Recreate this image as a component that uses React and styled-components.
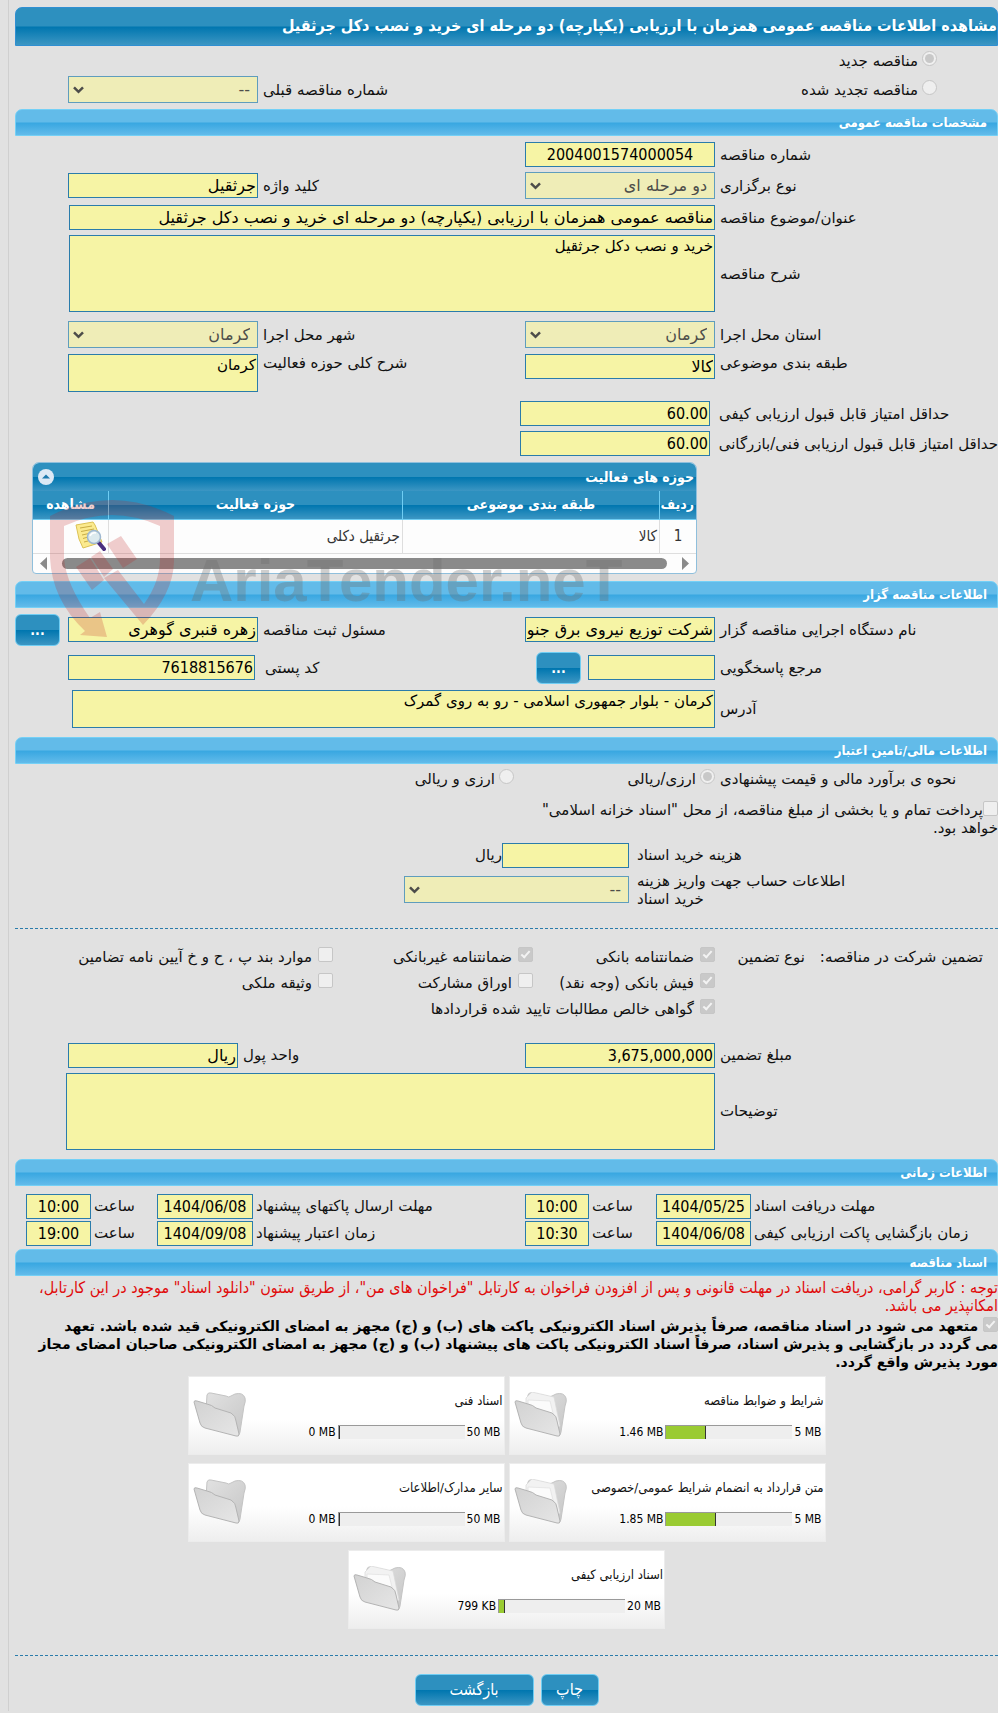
import React from "react";
import styled, { createGlobalStyle, css } from "styled-components";

const condensed = '"DejaVu Sans Condensed", "DejaVu Sans", sans-serif';

const GlobalStyle = createGlobalStyle`
  *, *::before, *::after { box-sizing: border-box; }
  body {
    margin: 0;
    background: #e1e1e1;
    overflow-x: hidden;
  }
  body, input, select, textarea, button {
    font-family: "DejaVu Sans", sans-serif;
  }
`;

const deepBlue = "linear-gradient(#2d90bf 0 49%, #0076af 51%, #3c96c3)";
const skyBlue = "linear-gradient(#62bbe9 0 48%, #38a7e1 52%, #62bbea)";

const Page = styled.main`
  margin-left: 8px;
  padding: 7px 0 5px 6px;
  border-left: 1px solid #cfcfcf;
  font-size: 15px;
  line-height: 18px;
  color: #111;
`;

const TitleBar = styled.h1`
  margin: 0;
  height: 39px;
  line-height: 36px;
  border: 1px solid #2f8fd2;
  border-radius: 7px 7px 0 0;
  background: ${deepBlue};
  color: #fff;
  font-family: ${condensed};
  font-size: 16px;
  font-weight: bold;
  white-space: nowrap;
  overflow: hidden;
`;

const SectionBar = styled.h2`
  margin: ${(p) => p.$top || 6}px 0 0;
  padding-right: 10px;
  height: 27px;
  line-height: 25px;
  border: 1px solid #74d0f6;
  border-radius: 7px 7px 0 0;
  background: ${skyBlue};
  color: #fff;
  font-family: ${condensed};
  font-size: 13px;
  font-weight: bold;
`;

const Row = styled.div`
  display: grid;
  grid-template-columns: ${(p) => p.$cols || "283fr 190fr 267fr 190fr 53fr"};
  align-items: ${(p) => p.$align || "center"};
  margin-top: ${(p) => (p.$top === undefined ? 6 : p.$top)}px;
  min-height: ${(p) => p.$h || 24}px;
  > * { min-width: 0; }
`;

const Label = styled.label`
  text-align: left;
  white-space: nowrap;
  padding-left: ${(p) => p.$pad || 5}px;
`;

const fieldBox = css`
  display: block;
  width: 100%;
  margin: 0;
  border: 1px solid #2a7cab;
  border-radius: 0;
  background: #f6f4a5;
  color: #000;
  outline: 0;
`;

const Field = styled.input`
  ${fieldBox}
  height: 25px;
  padding: 0 1px;
  font-size: 16px;
  text-align: ${(p) => (p.$center ? "center" : "right")};
  ${(p) => p.$numeric && css`font-family: ${condensed};`}
`;

const Area = styled.textarea`
  ${fieldBox}
  height: ${(p) => p.$h}px;
  padding: 1px 1px;
  font-size: 15px;
  line-height: 18px;
  resize: none;
  overflow: hidden;
`;

const SelectWrap = styled.div`
  position: relative;
  svg {
    position: absolute;
    left: 5px;
    top: 10px;
  }
`;

const SelectBox = styled.select`
  ${fieldBox}
  appearance: none;
  height: 27px;
  padding: 0 7px;
  border-color: #5f9dbd;
  background: #efedb7;
  color: #4d4d4a;
  font-size: 16px;
  opacity: 1;
`;

const Tick = styled.input`
  appearance: none;
  flex: none;
  display: inline-block;
  position: relative;
  width: 15px;
  height: 15px;
  margin: 0;
  border: 1px solid #c6c6c6;
  border-radius: ${(p) => (p.type === "radio" ? "50%" : "2px")};
  background: #efefef;
  vertical-align: -1px;
  &[type="checkbox"]:checked { background: #c9c9c9; }
  &[type="radio"]:checked::after {
    content: "";
    position: absolute;
    inset: 2px;
    border-radius: 50%;
    background: #c8c8c8;
  }
  &[type="checkbox"]:checked::after {
    content: "";
    position: absolute;
    left: 4px;
    top: 1px;
    width: 5px;
    height: 9px;
    border: solid #f3f3f3;
    border-width: 0 2px 2px 0;
    transform: rotate(42deg);
  }
`;

const Option = styled.label`
  display: flex;
  gap: ${(p) => p.$gap || 4}px;
  padding-right: ${(p) => p.$start || 0}px;
  white-space: nowrap;
  line-height: 20px;
`;

const Button = styled.button`
  height: 32px;
  min-width: ${(p) => p.$w}px;
  padding: 0 8px;
  border: 1px solid #6fcdf3;
  border-radius: 6px;
  background: ${deepBlue};
  color: #fff;
  font-family: ${condensed};
  font-size: ${(p) => (p.$strong ? 14 : 16)}px;
  font-weight: ${(p) => (p.$strong ? "bold" : "normal")};
`;

const Beside = styled.div`
  display: flex;
  gap: 7px;
  align-items: center;
  ${Field} { width: 127px; flex: none; }
  ${Button} { flex: none; }
`;

const Leftmost = styled.div`
  text-align: left;
`;

const Panel = styled.section`
  position: relative;
  margin: 6px 301px 0 17px;
`;

const PanelFrame = styled.div`
  border: 1px solid #8fbfdc;
  border-radius: 7px 7px 4px 4px;
  background: #fdfdfd;
  overflow: hidden;
`;

const PanelTitle = styled.header`
  display: flex;
  align-items: center;
  justify-content: space-between;
  height: 28px;
  padding: 0 2px 0 5px;
  background: ${deepBlue};
  color: #fff;
  font-family: ${condensed};
  font-size: 14px;
  font-weight: bold;
`;

const Table = styled.table`
  width: 100%;
  table-layout: fixed;
  border-collapse: collapse;
  font-family: ${condensed};
  th, td { padding: 0 2px; }
  th {
    height: 28px;
    padding-bottom: 2px;
    border-bottom: 1px solid #6fcdf3;
    background: ${deepBlue};
    color: #fff;
    font-size: 14px;
    white-space: nowrap;
  }
  th + th { border-right: 1px solid #6fcdf3; }
  td {
    height: 34px;
    border-bottom: 1px solid #dedede;
    font-size: 15px;
    color: #333;
  }
  td + td { border-right: 1px solid #dedede; }
  td:first-child { text-align: center; }
  td svg { display: block; }
`;

const ScrollStrip = styled.div`
  display: flex;
  align-items: center;
  gap: 15px;
  height: 19px;
  padding: 0 7px;
  direction: ltr;
  svg { flex: none; }
`;

const Thumb = styled.div`
  flex: 1;
  height: 11px;
  border-radius: 6px;
  background: #8a8a8a;
`;

const Watermark = styled.div`
  position: absolute;
  left: 18px;
  top: 38px;
  display: flex;
  gap: 14px;
  direction: ltr;
  pointer-events: none;
  z-index: 1;
  svg { flex: none; }
`;

const WatermarkName = styled.span`
  margin-top: 41px;
  font: bold 60px/80px "Liberation Sans", sans-serif;
  color: rgba(110, 110, 110, 0.32);
`;

const Payment = styled.label`
  display: block;
  max-width: 474px;
  margin-top: 9px;
`;

const Divider = styled.hr`
  margin: ${(p) => p.$top}px 0 0;
  border: 0;
  border-top: 1px dashed #2a7cab;
`;

const GuaranteeGrid = styled.div`
  display: grid;
  grid-template-columns: 185fr 98fr 182fr 200fr 318fr;
  grid-auto-rows: 26px;
  align-items: center;
  margin-top: 15px;
  > * { min-width: 0; white-space: nowrap; }
`;

const Cell = styled.span`
  grid-column: ${(p) => p.$col || "auto"};
  padding-right: ${(p) => p.$start || 0}px;
`;

const Notice = styled.p`
  margin: 3px 0 0;
  color: #e00b0b;
  font-family: ${condensed};
  font-size: 16px;
`;

const Pledge = styled.label`
  display: block;
  margin-top: 2px;
  font-size: 14px;
  font-weight: bold;
  color: #000;
`;

const Line = styled.span`
  display: block;
  white-space: nowrap;
`;

const Cards = styled.div`
  display: flex;
  flex-wrap: wrap;
  justify-content: center;
  gap: 8px 4px;
  max-width: 640px;
  margin: 5px auto 0;
`;

const Card = styled.article`
  display: flex;
  flex: none;
  justify-content: space-between;
  width: 317px;
  height: 79px;
  padding: 15px 1px 0 4px;
  border: 1px solid #ececec;
  background: linear-gradient(#fff 55%, #eee);
  font-family: ${condensed};
  font-size: 12px;
`;

const CardBody = styled.div`
  flex: 1;
  h3 {
    margin: 0 0 13px;
    font-size: 13px;
    line-height: 18px;
    font-weight: normal;
  }
`;

const Usage = styled.div`
  display: flex;
  align-items: center;
  gap: 2px;
  padding-right: 2px;
  color: #000;
`;

const Bar = styled.div`
  width: 127px;
  height: 14px;
  border-top: 1px solid #999;
  border-left: 1px solid #999;
  background: #eee;
  direction: ltr;
`;

const BarFill = styled.div`
  height: 100%;
  border-right: 1px solid #333;
  background: #9acb32;
`;

const Actions = styled.footer`
  display: flex;
  justify-content: center;
  gap: 7px;
  margin-top: 18px;
`;

const Select = ({ id, value }) => (
  <SelectWrap>
    <SelectBox id={id} disabled defaultValue={value}>
      <option>{value}</option>
    </SelectBox>
    <svg width="11" height="8" viewBox="0 0 11 8" fill="none" stroke="#4d4d4a" strokeWidth="2.5">
      <path d="M1 1.3 5.5 5.8 10 1.3" />
    </svg>
  </SelectWrap>
);

const Input = ({ id, value = "", center, numeric }) => (
  <Field id={id} type="text" readOnly value={value} $center={center} $numeric={numeric || center} />
);

const Choice = ({ type = "checkbox", name, checked = false, gap, start, children }) => (
  <Option $gap={gap} $start={start}>
    <Tick type={type} name={name} defaultChecked={checked} disabled />
    <span>{children}</span>
  </Option>
);

const Folder = ({ full, id }) => (
  <svg width="54" height="46" viewBox="0 0 54 46">
    <defs>
      <linearGradient id={`${id}b`} x1="0" y1="0" x2="1" y2="1">
        <stop offset="0" stopColor="#e2e2e2" />
        <stop offset="1" stopColor="#c6c6c6" />
      </linearGradient>
      <linearGradient id={`${id}f`} x1="0" y1="0" x2="1" y2="1">
        <stop offset="0" stopColor="#d2d2d2" />
        <stop offset="1" stopColor="#e6e6e6" />
      </linearGradient>
    </defs>
    <path d="M14 3Q15 0 18 1L33 4Q36 6 38 4L42 2Q50 0 52 6Q53 9 51 14L47 40Q46 45 43 43L12 34Z" fill={`url(#${id}b)`} stroke="#c4c4c4" />
    {full && (
      <>
        <path d="M12 6 18 0 40 5 46 34 41 38 12 20Z" fill="#f2f2f2" stroke="#d8d8d8" strokeWidth=".7" />
        <path d="M14 8 36 9 43 37 14 22Z" fill="#fbfbfb" stroke="#e0e0e0" strokeWidth=".7" />
      </>
    )}
    <path d="M1 10Q1 8 4 9L14 12Q19 13 22 16L38 21Q43 24 43 29L46 42Q46 45 43 44L12 36Q8 35 7 31Z" fill={`url(#${id}f)`} stroke="#b4b4b4" />
  </svg>
);

const NoteIcon = () => (
  <svg width="31" height="30" viewBox="0 0 31 30" role="img" aria-label="مشاهده">
    <path d="M1 4 18 1 20 4 27 21 8 27 4 18Z" fill="#fbea8e" stroke="#dcc254" />
    <path d="M5 7 17 5M6 10.500 19 8M7 14 16 12M8 17.500 13 16M9 21 13 20" stroke="#c9ac45" strokeWidth="1" />
    <path d="m24 22 5 6" stroke="#4a2f80" strokeWidth="4" strokeLinecap="round" />
    <circle cx="19" cy="16" r="6.500" fill="#d9e9f6" fillOpacity=".92" stroke="#9fb8d0" strokeWidth="1.500" />
    <path d="M15 15Q17 11 21 12" stroke="#fff" strokeWidth="1.500" fill="none" />
  </svg>
);

const Shield = () => (
  <svg width="126" height="140" viewBox="0 0 126 140" fill="#be1e1e" fillOpacity=".22">
    <path d="M0 16Q62-16 124 16V62Q123 94 93 125L54 78 68 70 94 104Q110 82 110 58V26Q62 4 14 26V58Q16 84 40 118L50 112 57 137 30 135 35 131Q2 100 0 58Z" />
    <path d="M26 67 40 58 54 80 42 90ZM41 57 50 51 63 69 54 77ZM57 44 71 36 87 59 73 68Z" />
  </svg>
);

const documents = [
  { title: "شرایط و ضوابط مناقصه", max: "5 MB", used: "1.46 MB", fill: 31 },
  { title: "اسناد فنی", max: "50 MB", used: "0 MB", fill: 0 },
  { title: "متن قرارداد به انضمام شرایط عمومی/خصوصی", max: "5 MB", used: "1.85 MB", fill: 39 },
  { title: "سایر مدارک/اطلاعات", max: "50 MB", used: "0 MB", fill: 0 },
  { title: "اسناد ارزیابی کیفی", max: "20 MB", used: "799 KB", fill: 5 },
];

const timeColumns = "247fr 95fr 67fr 64fr 272fr 96fr 66fr 65fr 11fr";

const TimeRow = ({ id, top, items }) => (
  <Row $cols={timeColumns} $top={top} $h={25}>
    {items.map(([label, date, time], i) => (
      <React.Fragment key={label}>
        <Label $pad={3} htmlFor={`${id}d${i}`}>{label}</Label>
        <Input id={`${id}d${i}`} value={date} center />
        <Label $pad={3} htmlFor={`${id}t${i}`}>ساعت</Label>
        <Input id={`${id}t${i}`} value={time} center />
      </React.Fragment>
    ))}
  </Row>
);

export default function App() {
  return (
    <Page dir="rtl" lang="fa">
      <GlobalStyle />
      <TitleBar>مشاهده اطلاعات مناقصه عمومی همزمان با ارزیابی (یکپارچه) دو مرحله ای خرید و نصب دکل جرثقیل</TitleBar>

      <Row $top={2} $h={25}>
        <Choice type="radio" name="kind" checked start={61}>مناقصه جدید</Choice>
      </Row>
      <Row $top={3}>
        <Choice type="radio" name="kind" start={61}>مناقصه تجدید شده</Choice>
        <span />
        <Label htmlFor="prev">شماره مناقصه قبلی</Label>
        <Select id="prev" value="--" />
      </Row>

      <SectionBar>مشخصات مناقصه عمومی</SectionBar>
      <Row>
        <Label htmlFor="number">شماره مناقصه</Label>
        <Input id="number" value="2004001574000054" center />
      </Row>
      <Row $top={5}>
        <Label htmlFor="type">نوع برگزاری</Label>
        <Select id="type" value="دو مرحله ای" />
        <Label htmlFor="keyword">کلید واژه</Label>
        <Input id="keyword" value="جرثقیل" />
      </Row>
      <Row $cols="283fr 646fr 54fr">
        <Label htmlFor="subject">عنوان/موضوع مناقصه</Label>
        <Input id="subject" value="مناقصه عمومی همزمان با ارزیابی (یکپارچه) دو مرحله ای خرید و نصب دکل جرثقیل" />
      </Row>
      <Row $cols="283fr 646fr 54fr" $top={5}>
        <Label htmlFor="description">شرح مناقصه</Label>
        <Area id="description" $h={77} readOnly value="خرید و نصب دکل جرثقیل" />
      </Row>
      <Row $top={9}>
        <Label htmlFor="province">استان محل اجرا</Label>
        <Select id="province" value="کرمان" />
        <Label htmlFor="city">شهر محل اجرا</Label>
        <Select id="city" value="کرمان" />
      </Row>
      <Row $align="start">
        <Label htmlFor="category">طبقه بندی موضوعی</Label>
        <Input id="category" value="کالا" />
        <Label htmlFor="scope">شرح کلی حوزه فعالیت</Label>
        <Area id="scope" $h={38} readOnly value="کرمان" />
      </Row>
      <Row $cols="288fr 190fr 505fr" $top={9}>
        <Label $pad={9} htmlFor="quality">حداقل امتیاز قابل قبول ارزیابی کیفی</Label>
        <Input id="quality" value="60.00" numeric />
      </Row>
      <Row $cols="288fr 190fr 505fr" $top={5}>
        <Label $pad={9} htmlFor="technical">حداقل امتیاز قابل قبول ارزیابی فنی/بازرگانی</Label>
        <Input id="technical" value="60.00" numeric />
      </Row>

      <Panel>
        <PanelFrame>
          <PanelTitle>
            <span>حوزه های فعالیت</span>
            <svg width="16" height="16" viewBox="0 0 16 16">
              <circle cx="8" cy="8" r="8" fill="#dde9f5" />
              <path d="M4 9.500 8 5.500 12 9.500Z" fill="#1c78ad" />
            </svg>
          </PanelTitle>
          <Table>
            <colgroup>
              <col style={{ width: "5.5%" }} />
              <col style={{ width: "38.8%" }} />
              <col />
              <col style={{ width: "11.4%" }} />
            </colgroup>
            <thead>
              <tr>
                <th>ردیف</th>
                <th>طبقه بندی موضوعی</th>
                <th>حوزه فعالیت</th>
                <th>مشاهده</th>
              </tr>
            </thead>
            <tbody>
              <tr>
                <td>1</td>
                <td>کالا</td>
                <td>جرثقیل دکلی</td>
                <td><NoteIcon /></td>
              </tr>
            </tbody>
          </Table>
          <ScrollStrip>
            <svg width="7" height="13" viewBox="0 0 7 13"><path d="M7 0V13L0 6.500Z" fill="#8a8a8a" /></svg>
            <Thumb />
            <svg width="7" height="13" viewBox="0 0 7 13"><path d="M0 0V13L7 6.500Z" fill="#8a8a8a" /></svg>
          </ScrollStrip>
        </PanelFrame>
        <Watermark>
          <Shield />
          <WatermarkName>AriaTender.neT</WatermarkName>
        </Watermark>
      </Panel>

      <SectionBar $top={7}>اطلاعات مناقصه گزار</SectionBar>
      <Row>
        <Label htmlFor="org">نام دستگاه اجرایی مناقصه گزار</Label>
        <Input id="org" value="شرکت توزیع نیروی برق جنوب استان کرمان" />
        <Label htmlFor="registrar">مسئول ثبت مناقصه</Label>
        <Input id="registrar" value="زهره قنبری گوهری" />
        <Leftmost><Button type="button" $w={45} $strong>...</Button></Leftmost>
      </Row>
      <Row $cols="283fr 190fr 270fr 187fr 53fr">
        <Label htmlFor="contact">مرجع پاسخگویی</Label>
        <Beside>
          <Input id="contact" />
          <Button type="button" $w={45} $strong>...</Button>
        </Beside>
        <Label $pad={10} htmlFor="postal">کد پستی</Label>
        <Input id="postal" value="7618815676" numeric />
      </Row>
      <Row $cols="283fr 643fr 57fr">
        <Label htmlFor="address">آدرس</Label>
        <Area id="address" $h={38} readOnly value="کرمان - بلوار جمهوری اسلامی - رو به روی گمرک" />
      </Row>

      <SectionBar $top={9}>اطلاعات مالی/تامین اعتبار</SectionBar>
      <Row $cols="283fr 201fr 499fr" $top={3} $h={25}>
        <Label as="span">نحوه ی برآورد مالی و قیمت پیشنهادی</Label>
        <Choice type="radio" name="currency" checked>ارزی/ریالی</Choice>
        <Choice type="radio" name="currency">ارزی و ریالی</Choice>
      </Row>
      <Payment>
        <Tick type="checkbox" disabled />پرداخت تمام و یا بخشی از مبلغ مناقصه، از محل "اسناد خزانه اسلامی" خواهد بود.
      </Payment>
      <Row $cols="369fr 127fr 487fr">
        <Label $pad={8} htmlFor="fee">هزینه خرید اسناد</Label>
        <Input id="fee" />
        <span>ریال</span>
      </Row>
      <Row $cols="369fr 225fr 389fr" $top={4}>
        <Label $pad={8} htmlFor="account">اطلاعات حساب جهت واریز هزینه<br />خرید اسناد</Label>
        <Select id="account" value="--" />
      </Row>
      <Divider $top={20} />

      <GuaranteeGrid>
        <Cell $start={15}>تضمین شرکت در مناقصه:</Cell>
        <Cell $start={8}>نوع تضمین</Cell>
        <Choice checked gap={6}>ضمانتنامه بانکی</Choice>
        <Choice checked gap={6}>ضمانتنامه غیربانکی</Choice>
        <Choice gap={6}>موارد بند پ ، ح و خ آیین نامه تضامین</Choice>
        <Cell $col="span 2" />
        <Choice checked gap={6}>فیش بانکی (وجه نقد)</Choice>
        <Choice gap={6}>اوراق مشارکت</Choice>
        <Choice gap={6}>وثیقه ملکی</Choice>
        <Cell $col="span 2" />
        <Choice checked gap={6}>گواهی خالص مطالبات تایید شده قراردادها</Choice>
      </GuaranteeGrid>

      <Row $cols="283fr 190fr 287fr 170fr 53fr" $top={21}>
        <Label htmlFor="amount">مبلغ تضمین</Label>
        <Input id="amount" value="3,675,000,000" numeric />
        <Label htmlFor="unit">واحد پول</Label>
        <Input id="unit" value="ریال" />
      </Row>
      <Row $cols="283fr 649fr 51fr" $top={5}>
        <Label htmlFor="notes">توضیحات</Label>
        <Area id="notes" $h={77} readOnly value="" />
      </Row>

      <SectionBar $top={9}>اطلاعات زمانی</SectionBar>
      <TimeRow id="a" top={8} items={[["مهلت دریافت اسناد", "1404/05/25", "10:00"], ["مهلت ارسال پاکتهای پیشنهاد", "1404/06/08", "10:00"]]} />
      <TimeRow id="b" top={2} items={[["زمان بازگشایی پاکت ارزیابی کیفی", "1404/06/08", "10:30"], ["زمان اعتبار پیشنهاد", "1404/09/08", "19:00"]]} />

      <SectionBar $top={3}>اسناد مناقصه</SectionBar>
      <Notice>
        <Line>توجه : کاربر گرامی، دریافت اسناد در مهلت قانونی و پس از افزودن فراخوان به کارتابل "فراخوان های من"، از طریق ستون "دانلود اسناد" موجود در این کارتابل،</Line>
        <Line>امکانپذیر می باشد.</Line>
      </Notice>
      <Pledge>
        <Line><Tick type="checkbox" defaultChecked disabled /> متعهد می شود در اسناد مناقصه، صرفاً پذیرش اسناد الکترونیکی پاکت های (ب) و (ج) مجهز به امضای الکترونیکی قید شده باشد. تعهد</Line>
        <Line>می گردد در بازگشایی و پذیرش اسناد، صرفاً اسناد الکترونیکی پاکت های پیشنهاد (ب) و (ج) مجهز به امضای الکترونیکی صاحبان امضای مجاز</Line>
        <Line>مورد پذیرش واقع گردد.</Line>
      </Pledge>

      <Cards>
        {documents.map((d, i) => (
          <Card key={d.title}>
            <CardBody>
              <h3>{d.title}</h3>
              <Usage>
                <span dir="ltr">{d.max}</span>
                <Bar><BarFill style={{ width: `${d.fill}%` }} /></Bar>
                <span dir="ltr">{d.used}</span>
              </Usage>
            </CardBody>
            <Folder id={`folder${i}`} full={d.fill > 0} />
          </Card>
        ))}
      </Cards>

      <Divider $top={26} />
      <Actions>
        <Button type="button" $w={58}>چاپ</Button>
        <Button type="button" $w={119}>بازگشت</Button>
      </Actions>
    </Page>
  );
}
